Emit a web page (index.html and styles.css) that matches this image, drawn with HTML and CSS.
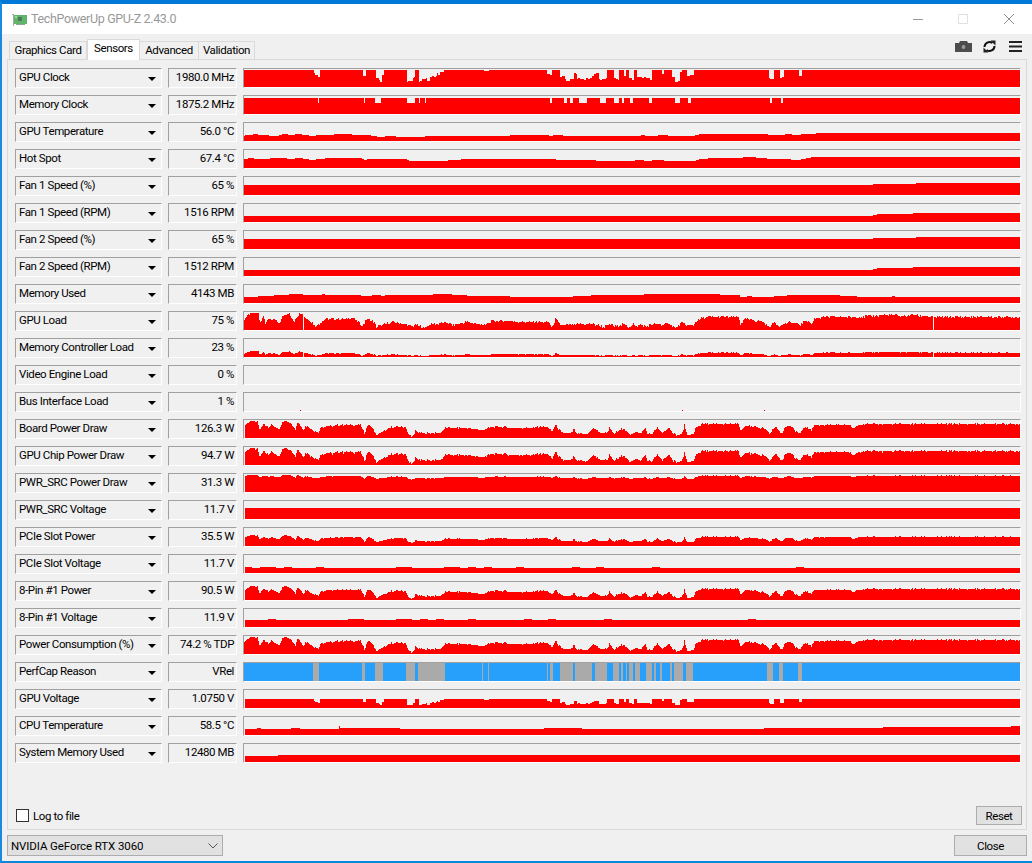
FILE: index.html
```html
<!DOCTYPE html>
<html lang="en">
<head>
<meta charset="utf-8">
<title>TechPowerUp GPU-Z 2.43.0</title>
<link rel="stylesheet" href="styles.css">
</head>
<body>
<div class="window">
  <header class="titlebar">
    <svg class="appicon" width="15" height="14" viewBox="0 0 15 14">
      <path class="icon-bracket" d="M0 1h2v12H1V2H0z"/>
      <rect class="icon-card" x="2" y="2" width="13" height="9"/>
      <rect class="icon-chip" x="6" y="4" width="4" height="4"/>
      <rect class="icon-light" x="3" y="3" width="2" height="2"/>
      <rect class="icon-edge" x="4" y="11" width="9" height="1"/>
    </svg>
    <span class="title">TechPowerUp GPU-Z 2.43.0</span>
    <div class="controls">
      <svg width="12" height="12" viewBox="0 0 12 12"><path class="ctl-min" d="M1 6.500h10"/></svg>
      <svg width="12" height="12" viewBox="0 0 12 12"><path class="ctl-max" d="M1.500 1.500h9v9h-9z"/></svg>
      <svg class="ctl-x" width="12" height="12" viewBox="0 0 12 12"><path class="ctl-close" d="M1 1l10 10M11 1L1 11"/></svg>
    </div>
  </header>
  <div class="client">
    <div class="tabbar">
      <div class="tabs">
        <div class="tab tab-a">Graphics Card</div>
        <div class="tab tab-b tab-active">Sensors</div>
        <div class="tab tab-c">Advanced</div>
        <div class="tab tab-d">Validation</div>
      </div>
      <div class="tools">
        <svg width="17" height="11" viewBox="0 0 17 11"><path class="tool-camera" d="M0 2h4l1-2h7l1 2h4v9H0z"/><circle class="tool-lens" cx="8.500" cy="6" r="2.500"/></svg>
        <svg width="13" height="13" viewBox="0 0 13 13"><path class="tool-stroke" d="M1.500 7A5 5 0 0 1 9.500 3M11.500 6A5 5 0 0 1 3.500 10"/><path class="tool-fill" d="M7.500 0.500l5 0v5zM5.500 12.500l-5 0v-5z"/></svg>
        <svg class="tool-menu" width="13" height="11" viewBox="0 0 13 11"><path class="tool-fill" d="M0 0h13v2H0zM0 4.500h13v2H0zM0 9h13v2H0z"/></svg>
      </div>
    </div>
    <main class="panel">
      <div class="row"><div class="combo"><span>GPU Clock</span><i class="arrow"></i></div><div class="value">1980.0 MHz</div><div class="graph" data-s="clock"></div></div>
      <div class="row"><div class="combo"><span>Memory Clock</span><i class="arrow"></i></div><div class="value">1875.2 MHz</div><div class="graph" data-s="memclock"></div></div>
      <div class="row"><div class="combo"><span>GPU Temperature</span><i class="arrow"></i></div><div class="value">56.0 °C</div><div class="graph" data-s="gputemp"></div></div>
      <div class="row"><div class="combo"><span>Hot Spot</span><i class="arrow"></i></div><div class="value">67.4 °C</div><div class="graph" data-s="hotspot"></div></div>
      <div class="row"><div class="combo"><span>Fan 1 Speed (%)</span><i class="arrow"></i></div><div class="value">65 %</div><div class="graph" data-s="fanpct"></div></div>
      <div class="row"><div class="combo"><span>Fan 1 Speed (RPM)</span><i class="arrow"></i></div><div class="value">1516 RPM</div><div class="graph" data-s="fanrpm"></div></div>
      <div class="row"><div class="combo"><span>Fan 2 Speed (%)</span><i class="arrow"></i></div><div class="value">65 %</div><div class="graph" data-s="fanpct"></div></div>
      <div class="row"><div class="combo"><span>Fan 2 Speed (RPM)</span><i class="arrow"></i></div><div class="value">1512 RPM</div><div class="graph" data-s="fanrpm"></div></div>
      <div class="row"><div class="combo"><span>Memory Used</span><i class="arrow"></i></div><div class="value">4143 MB</div><div class="graph" data-s="memused"></div></div>
      <div class="row"><div class="combo"><span>GPU Load</span><i class="arrow"></i></div><div class="value">75 %</div><div class="graph" data-s="load"></div></div>
      <div class="row"><div class="combo"><span>Memory Controller Load</span><i class="arrow"></i></div><div class="value">23 %</div><div class="graph" data-s="mcl"></div></div>
      <div class="row"><div class="combo"><span>Video Engine Load</span><i class="arrow"></i></div><div class="value">0 %</div><div class="graph" data-s="empty"></div></div>
      <div class="row"><div class="combo"><span>Bus Interface Load</span><i class="arrow"></i></div><div class="value">1 %</div><div class="graph" data-s="bus"></div></div>
      <div class="row"><div class="combo"><span>Board Power Draw</span><i class="arrow"></i></div><div class="value">126.3 W</div><div class="graph" data-s="board"></div></div>
      <div class="row"><div class="combo"><span>GPU Chip Power Draw</span><i class="arrow"></i></div><div class="value">94.7 W</div><div class="graph" data-s="chip"></div></div>
      <div class="row"><div class="combo"><span>PWR_SRC Power Draw</span><i class="arrow"></i></div><div class="value">31.3 W</div><div class="graph" data-s="pwrsrc"></div></div>
      <div class="row"><div class="combo"><span>PWR_SRC Voltage</span><i class="arrow"></i></div><div class="value">11.7 V</div><div class="graph" data-s="pwrv"></div></div>
      <div class="row"><div class="combo"><span>PCIe Slot Power</span><i class="arrow"></i></div><div class="value">35.5 W</div><div class="graph" data-s="pcie"></div></div>
      <div class="row"><div class="combo"><span>PCIe Slot Voltage</span><i class="arrow"></i></div><div class="value">11.7 V</div><div class="graph" data-s="pciev"></div></div>
      <div class="row"><div class="combo"><span>8-Pin #1 Power</span><i class="arrow"></i></div><div class="value">90.5 W</div><div class="graph" data-s="pin"></div></div>
      <div class="row"><div class="combo"><span>8-Pin #1 Voltage</span><i class="arrow"></i></div><div class="value">11.9 V</div><div class="graph" data-s="pinv"></div></div>
      <div class="row"><div class="combo"><span>Power Consumption (%)</span><i class="arrow"></i></div><div class="value">74.2 % TDP</div><div class="graph" data-s="tdp"></div></div>
      <div class="row"><div class="combo"><span>PerfCap Reason</span><i class="arrow"></i></div><div class="value">VRel</div><div class="graph" data-s="perfcap"></div></div>
      <div class="row"><div class="combo"><span>GPU Voltage</span><i class="arrow"></i></div><div class="value">1.0750 V</div><div class="graph" data-s="volt"></div></div>
      <div class="row"><div class="combo"><span>CPU Temperature</span><i class="arrow"></i></div><div class="value">58.5 °C</div><div class="graph" data-s="cputemp"></div></div>
      <div class="row"><div class="combo"><span>System Memory Used</span><i class="arrow"></i></div><div class="value">12480 MB</div><div class="graph" data-s="sysmem"></div></div>
      <div class="panel-foot">
        <label class="log"><i class="checkbox"></i><span>Log to file</span></label>
        <button class="btn btn-reset" type="button">Reset</button>
      </div>
    </main>
    <footer class="bottom">
      <div class="gpu-select"><span>NVIDIA GeForce RTX 3060</span>
        <svg width="10" height="6" viewBox="0 0 10 6"><path class="chev" d="M0.500 0.500L5 5l4.500-4.500"/></svg>
      </div>
      <button class="btn btn-close" type="button">Close</button>
    </footer>
  </div>
</div>
<script src="script.js"></script>
</body>
</html>
```
FILE: styles.css
```css
* { box-sizing: border-box; }
html, body { margin: 0; padding: 0; }
body {
  width: 1032px;
  height: 863px;
  overflow: hidden;
  font-family: Roboto, "Liberation Sans", Arial, sans-serif;
  font-size: 11.5px;
  letter-spacing: -0.4px;
  color: #000;
}
.window {
  width: 1032px;
  height: 863px;
  display: flex;
  flex-direction: column;
  background: #f0f0f0;
  border-top: 4px solid #0078d7;
  border-left: 2px solid #1a8ae0;
  border-bottom: 2px solid #0c87e0;
}
.titlebar {
  height: 30px;
  flex: none;
  display: flex;
  align-items: center;
  background: #fff;
  padding-left: 10px;
}
.appicon { margin-right: 4px; margin-top: 1px; }
.icon-bracket { fill: #a8a8a8; }
.icon-card { fill: #5fb56a; }
.icon-chip { fill: #4c7a56; }
.icon-light { fill: #a6d6ab; }
.icon-edge { fill: #8aa88f; }
.title {
  font-size: 12.5px;
  letter-spacing: -0.35px;
  color: #999;
  margin-top: -2px;
}
.controls {
  margin-left: auto;
  display: flex;
  gap: 33px;
  padding-right: 17px;
}
.ctl-x { margin-left: 1px; }
.ctl-min { stroke: #999; fill: none; }
.ctl-max { stroke: #e0e0e0; fill: none; }
.ctl-close { stroke: #8c8c8c; fill: none; }
.client {
  flex: 1;
  min-height: 0;
  display: flex;
  flex-direction: column;
  padding: 0 5px;
}
.tabbar {
  height: 25px;
  flex: none;
  display: flex;
  align-items: flex-end;
  justify-content: space-between;
}
.tabs {
  display: flex;
  align-items: flex-start;
  padding-left: 2px;
  margin-bottom: -1px;
  position: relative;
  z-index: 1;
}
.tab {
  height: 18px;
  margin-top: 2px;
  line-height: 17px;
  text-align: center;
  background: #f0f0f0;
  border: 1px solid #d9d9d9;
  border-bottom: 0;
  white-space: nowrap;
}
.tab-a { width: 78px; }
.tab-b { width: 53px; }
.tab-c { width: 60px; margin-left: -1px; }
.tab-d { width: 57px; margin-left: -1px; }
.tab-active {
  height: 21px;
  margin-top: 0;
  background: #fff;
  line-height: 16px;
}
.tools {
  display: flex;
  align-items: center;
  align-self: flex-start;
  gap: 11px;
  padding: 6px 5px 0 0;
}
.tool-menu { margin-left: 2px; }
.tool-camera { fill: #4d4d4d; }
.tool-fill { fill: #222; }
.tool-lens { fill: #9a9a9a; stroke: #444; }
.tool-stroke { fill: none; stroke: #111; stroke-width: 2; }
.panel {
  height: 771px;
  flex: none;
  display: flex;
  flex-direction: column;
  gap: 7px;
  padding: 8px 5px 4px 7px;
  border: 1px solid #d9d9d9;
  background: #f0f0f0;
}
.row {
  display: flex;
  gap: 6px;
  height: 20px;
  flex: none;
}
.combo, .value, .graph {
  border-top: 1px solid #a0a0a0;
  border-left: 1px solid #a0a0a0;
  border-right: 1px solid #fff;
  border-bottom: 1px solid #fff;
  background: #f0f0f0;
}
.combo {
  width: 147px;
  display: flex;
  align-items: center;
  justify-content: space-between;
  padding: 0 5px 2px 3px;
  white-space: nowrap;
}
.arrow {
  width: 0;
  height: 0;
  border-left: 4px solid transparent;
  border-right: 4px solid transparent;
  border-top: 4px solid #000;
  margin-top: 3px;
}
.value {
  width: 69px;
  text-align: right;
  padding-right: 2px;
  line-height: 17px;
  white-space: nowrap;
}
.graph { width: 778px; line-height: 0; overflow: hidden; }
.plot { display: block; shape-rendering: crispEdges; }
.plot-red { fill: #ff0000; }
.plot-blue { fill: #26a0fa; }
.plot-gray { fill: #aaaaaa; }
.panel-foot {
  margin-top: auto;
  display: flex;
  align-items: center;
  justify-content: space-between;
}
.log { display: flex; align-items: center; gap: 4px; margin-left: 1px; }
.checkbox {
  width: 13px;
  height: 13px;
  background: #fff;
  border: 1px solid #333;
  display: block;
}
.btn {
  font: inherit;
  letter-spacing: inherit;
  color: #000;
  background: #e1e1e1;
  border: 1px solid #adadad;
  padding: 0;
}
.btn-reset { width: 46px; height: 19px; margin-right: -1px; }
.bottom {
  flex: 1;
  display: flex;
  align-items: flex-start;
  justify-content: space-between;
  padding-top: 5px;
}
.gpu-select {
  width: 216px;
  height: 21px;
  background: #e1e1e1;
  border: 1px solid #adadad;
  display: flex;
  align-items: center;
  justify-content: space-between;
  padding: 0 4px 0 3px;
  letter-spacing: -0.1px;
}
.chev { fill: none; stroke: #555; }
.btn-close { width: 73px; height: 21px; }
```
FILE: script.js
```js
(function () {
  var W = 776, H = 18, NS = "http://www.w3.org/2000/svg";

  // Breakpoints were read from 3x crops: screen x = origin + zx / 3, graph x = screen x - 244.
  function conv(list, origin) {
    return list.map(function (p) { return [origin + p[0] / 3 - 244, p[1]]; });
  }
  function spans(list, origin) {
    return list.map(function (p) { return [origin + p[0] / 3 - 244, origin + p[1] / 3 - 244, p[2]]; });
  }
  function interp(pts, x) {
    if (x <= pts[0][0]) return pts[0][1];
    for (var i = 1; i < pts.length; i++) {
      if (x <= pts[i][0]) {
        var a = pts[i - 1], b = pts[i];
        return a[1] + (b[1] - a[1]) * (x - a[0]) / (b[0] - a[0] || 1);
      }
    }
    return pts[pts.length - 1][1];
  }
  function noise(x, seed) {
    var v = Math.sin((x + seed) * 12.9898) * 43758.5453;
    return v - Math.floor(v);
  }
  function stepAt(pts, x, d) {
    var h = d;
    for (var i = 0; i < pts.length; i++) { if (x >= pts[i][0]) h = pts[i][1]; }
    return h;
  }
  function inSpan(list, x, d) {
    for (var i = 0; i < list.length; i++) {
      if (x >= list[i][0] && x < list[i][1]) return list[i][2];
    }
    return d;
  }

  var boardPts = conv([[6,10],[15,13],[30,17],[52,16],[58,8],[70,14],[85,11],[95,13],[115,8],[130,17],[150,16],[165,8],[172,16],[190,8],[195,13],[215,8],[235,5],[240,11],[265,12],[305,13],[360,13],[372,5],[382,13],[395,11],[408,3],[430,7],[455,11],[495,11],[505,3],[520,2],[525,8],[535,5],[600,5],[615,10],[680,10],[725,8],[755,11],[850,10],[920,11],[935,6],[945,13],[965,5],[995,5],[1000,10],[1008,4],[1040,4],[1060,10],[1080,5],[1100,6],[1108,10],[1120,4],[1150,10],[1165,4]], 240)
    .concat(conv([[0,3],[15,6],[30,5],[45,10],[52,4],[65,4],[80,10],[95,5],[115,10],[130,5],[140,3],[155,4],[162,13],[170,3],[190,4],[195,10],[215,14],[325,14],[330,7],[345,12],[400,10],[420,4],[433,12],[445,8],[455,4],[462,11],[480,12],[500,6],[510,4],[520,11],[545,8],[552,13],[660,13],[665,9],[690,14],[1170,14]], 630));

  var loadPts = conv([[6,10],[15,12],[30,17],[55,17],[58,6],[70,15],[75,7],[85,11],[105,10],[115,6],[130,15],[145,17],[160,8],[170,14],[180,17],[188,17],[195,12],[215,8],[225,4],[240,7],[255,11],[300,11],[340,12],[365,4],[380,11],[400,8],[408,3],[455,8],[495,6],[510,4],[530,5],[550,2],[570,6],[620,7],[640,5],[680,8],[735,5],[755,9],[880,8],[925,8],[935,2],[945,11],[960,5],[1060,6],[1090,3],[1115,6],[1120,3],[1150,6],[1160,3]], 240)
    .concat(conv([[0,4],[10,7],[15,3],[30,6],[45,3],[60,5],[80,6],[100,5],[115,7],[135,2],[155,7],[165,5],[190,5],[195,8],[215,12],[240,13],[325,13],[330,6],[345,11],[400,8],[415,3],[433,8],[445,4],[480,8],[510,5],[525,10],[545,6],[552,12],[590,13],[680,13],[687,13],[720,14],[780,15],[820,14],[850,15],[905,13],[1170,13]], 630));

  var clockDips = spans([[220,225,15],[225,232,13],[232,238,11],[368,378,12],[408,415,8],[415,425,6],[425,432,12],[500,510,5],[510,518,6],[518,525,9],[535,545,6],[545,560,9],[560,570,6],[570,590,10],[590,600,13],[600,610,14],[730,745,16],[920,935,13],[960,975,10],[975,1000,7],[1000,1010,14],[1010,1025,9],[1025,1050,8],[1050,1060,10],[1060,1075,14],[1075,1100,8],[1120,1135,8],[1150,1158,10],[1165,1170,10]], 240)
    .concat(spans([[0,10,8],[20,40,10],[40,60,9],[60,66,8],[95,100,12],[125,135,10],[135,150,5],[150,155,14],[170,190,11],[415,430,8],[450,460,9],[505,515,12]], 630));

  var memNotches = spans([[233,236,11],[370,373,11],[405,423,11],[500,523,11],[535,538,11],[553,556,11],[930,936,11],[970,980,11],[990,997,11],[1015,1040,11],[1080,1098,11],[1120,1135,11],[1145,1150,11]], 240)
    .concat(spans([[0,8,11],[55,65,11],[133,150,11],[172,183,11],[418,426,11],[452,459,11]], 630));

  var gpuTempPts = conv([[0,5],[30,6],[45,7],[60,6],[110,5],[130,7],[155,6],[175,7],[215,5],[240,6],[320,7],[350,6],[385,6],[400,5],[420,4],[445,5],[490,4],[615,5],[770,5],[850,6],[920,6],[930,5],[945,6],[990,5],[1170,5]], 240)
    .concat(conv([[0,5],[30,5],[35,6],[50,5],[80,5],[85,6],[100,6],[125,5],[190,5],[195,6],[215,7],[410,7],[415,6],[460,6],[465,7],[505,6],[520,7],[555,7],[560,8],[1170,8]], 630));
  var hotPts = conv([[0,8],[30,10],[50,9],[130,10],[150,9],[180,10],[215,8],[240,9],[270,10],[360,10],[375,8],[385,9],[495,9],[510,7],[605,7],[680,9],[845,9],[930,9],[960,8],[1170,7]], 240)
    .concat(conv([[0,7],[30,8],[50,7],[80,8],[120,7],[190,7],[210,9],[255,10],[330,10],[345,11],[405,10],[415,9],[460,9],[505,8],[550,11],[1170,11]], 630));

  var memUsedSteps = conv([[0,6],[54,7],[102,8],[147,9],[189,8],[246,9],[255,8],[363,7],[396,8],[423,7],[435,8],[579,9],[636,8],[681,7],[810,6],[999,7],[1053,8]], 240)
    .concat(conv([[0,8],[40,9],[270,8],[330,6],[350,7],[365,6],[430,7],[470,8],[630,7],[680,6],[785,7],[795,6]], 630));
  var cpuSteps = conv([[15,6],[50,7],[62,6],[153,7],[180,6],[295,9],[300,7],[480,6],[912,7],[1026,6]], 240)
    .concat(conv([[0,6],[402,7],[759,8],[1143,9]], 630));

  var perfGray = spans([[219,237],[366,375],[405,429],[498,525],[534,615],[726,729],[744,747],[921,924],[930,939],[960,999],[1005,1056],[1065,1101],[1119,1137],[1143,1149],[1158,1161],[1167,1170]], 240)
    .concat(spans([[0,9],[15,30],[48,66],[72,78],[90,96],[120,126],[132,159],[168,189],[411,429],[447,459],[504,516]], 630));

  function clock(x) {
    var h = inSpan(clockDips, x, 17);
    if (h === 17 || h === 16) return h;
    var n = noise(Math.floor(x / 2), 23);
    return Math.min(17, h + (n > 0.66 ? 1 : n < 0.33 ? -1 : 0));
  }
  function memclock(x) { return inSpan(memNotches, x, 16); }
  function board(x) {
    var n = noise(x, 3), b = interp(boardPts, x);
    return Math.max(0, Math.min(17, Math.round(b + (n > 0.85 ? 1 : n < 0.15 ? -1 : 0))));
  }
  function load(x) {
    if (x === 59 || x === 689) return 0;
    var n = noise(x, 7), b = interp(loadPts, x);
    return Math.max(0, Math.min(17, Math.round(b + (n > 0.75 ? 1 : n < 0.25 ? -1 : 0))));
  }
  function bump(x, seed, rate) { return noise(Math.floor(x / 8), seed) > rate; }

  var series = {
    clock: clock,
    memclock: memclock,
    gputemp: function (x) { return Math.round(interp(gpuTempPts, x)); },
    hotspot: function (x) { return Math.round(interp(hotPts, x)); },
    fanpct: function (x) { return x >= 672 ? 12 : x >= 629 ? 11 : 10; },
    fanrpm: function (x) { return x >= 669 ? 9 : x >= 633 ? 8 : x >= 629 ? 7 : 6; },
    memused: function (x) { return stepAt(memUsedSteps, x, 6); },
    load: load,
    mcl: function (x) { return x === 59 || x === 689 ? 0 : Math.round(load(x) * 0.33); },
    empty: function () { return 0; },
    bus: function (x) { return x === 56 || x === 438 || x === 520 ? 1 : 0; },
    board: function (x) { return x < 1 ? 0 : board(x); },
    chip: function (x) { return x < 1 ? 0 : Math.max(1, board(x) - (x % 11 === 0 ? 1 : 0)); },
    pwrsrc: function (x) { return x < 1 ? 0 : Math.min(17, Math.round(12 + board(x) * 0.3)); },
    pwrv: function (x) { return x < 1 ? 0 : 11; },
    pcie: function (x) { return x < 1 ? 0 : Math.round(2 + board(x) * 0.5); },
    pciev: function (x) { return x < 1 ? 0 : (x < 560 && bump(x, 11, 0.72) ? 6 : 5); },
    pin: function (x) { return x < 1 ? 0 : Math.round(board(x) * 0.8); },
    pinv: function (x) { return x < 1 ? 0 : (x < 560 && bump(x, 17, 0.72) ? 8 : 7); },
    tdp: function (x) { return board(x); },
    volt: function (x) { return x < 1 ? 0 : Math.round(clock(x) * 0.53); },
    cputemp: function (x) { return x < 1 ? 0 : stepAt(cpuSteps, x, 6); },
    sysmem: function (x) { return x < 1 ? 0 : x >= 34 ? 7 : 6; }
  };

  function draw(el) {
    var svg = document.createElementNS(NS, "svg");
    svg.setAttribute("class", "plot");
    svg.setAttribute("width", W);
    svg.setAttribute("height", H);
    var key = el.getAttribute("data-s");
    var path = document.createElementNS(NS, "path");
    var d = "";
    if (key === "perfcap") {
      var bg = document.createElementNS(NS, "rect");
      bg.setAttribute("class", "plot-blue");
      bg.setAttribute("width", W);
      bg.setAttribute("height", H);
      svg.appendChild(bg);
      perfGray.forEach(function (g) {
        var a = Math.round(g[0]), b = Math.round(g[1]);
        d += "M" + a + " 0H" + b + "V" + H + "H" + a + "Z";
      });
      path.setAttribute("class", "plot-gray");
    } else {
      var fn = series[key];
      var start = 0, cur = fn(0);
      for (var x = 1; x <= W; x++) {
        var h = x < W ? fn(x) : -1;
        if (h !== cur) {
          if (cur > 0) d += "M" + start + " " + H + "V" + (H - cur) + "H" + x + "V" + H + "Z";
          start = x;
          cur = h;
        }
      }
      path.setAttribute("class", "plot-red");
    }
    path.setAttribute("d", d);
    svg.appendChild(path);
    el.appendChild(svg);
  }

  var nodes = document.querySelectorAll(".graph");
  for (var i = 0; i < nodes.length; i++) draw(nodes[i]);
})();
```
